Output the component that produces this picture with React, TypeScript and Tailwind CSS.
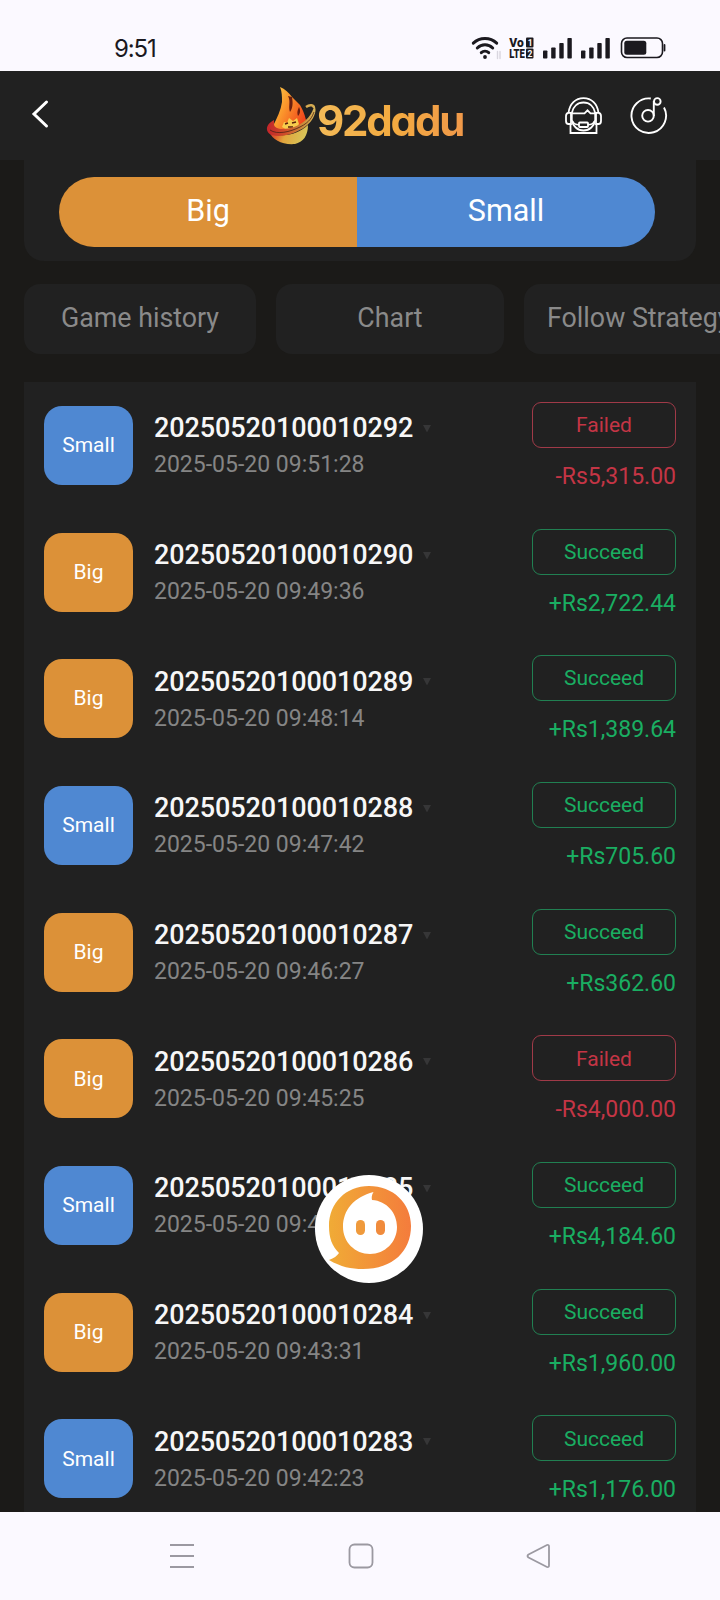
type Pick = 'Big' | 'Small';

interface Bet {
  id: string;
  time: string;
  pick: Pick;
  won: boolean;
  amount: string;
}

const bets: Bet[] = [
  { id: '20250520100010292', time: '2025-05-20 09:51:28', pick: 'Small', won: false, amount: '-Rs5,315.00' },
  { id: '20250520100010290', time: '2025-05-20 09:49:36', pick: 'Big', won: true, amount: '+Rs2,722.44' },
  { id: '20250520100010289', time: '2025-05-20 09:48:14', pick: 'Big', won: true, amount: '+Rs1,389.64' },
  { id: '20250520100010288', time: '2025-05-20 09:47:42', pick: 'Small', won: true, amount: '+Rs705.60' },
  { id: '20250520100010287', time: '2025-05-20 09:46:27', pick: 'Big', won: true, amount: '+Rs362.60' },
  { id: '20250520100010286', time: '2025-05-20 09:45:25', pick: 'Big', won: false, amount: '-Rs4,000.00' },
  { id: '20250520100010285', time: '2025-05-20 09:44:30', pick: 'Small', won: true, amount: '+Rs4,184.60' },
  { id: '20250520100010284', time: '2025-05-20 09:43:31', pick: 'Big', won: true, amount: '+Rs1,960.00' },
  { id: '20250520100010283', time: '2025-05-20 09:42:23', pick: 'Small', won: true, amount: '+Rs1,176.00' },
];

const Signal = () => (
  <svg width="29" height="21" viewBox="0 0 29 21" fill="#1b191f">
    <rect x="0" y="12.5" width="4.4" height="8" rx="0.8" />
    <rect x="8.2" y="9.5" width="4.4" height="11" rx="0.8" />
    <rect x="16.3" y="5" width="4.4" height="15.5" rx="0.8" />
    <rect x="24.4" y="0" width="4.4" height="20.5" rx="0.8" />
  </svg>
);

const StatusBar = () => (
  <div className="flex h-[71px] shrink-0 items-center justify-between bg-[#fbf9ff] pt-[25px] pr-[54px] pl-[114px]">
    <span className="mt-[2px] font-[Inter] text-[24px] leading-none tracking-[-1.1px] text-[#1b191f]">9:51</span>
    <div className="flex items-center">
      <svg width="30" height="24" viewBox="0 0 30 24" fill="none" stroke="#1b191f" strokeWidth="3" strokeLinecap="round">
        <path d="M2.3 7.2a17 17 0 0 1 23.4 0" />
        <path d="M6.3 12a11 11 0 0 1 15.4 0" />
        <path d="M10.3 16.6a5.4 5.4 0 0 1 7.4 0" />
        <circle cx="14" cy="21" r="1" strokeWidth="1.8" />
        <path d="M26.5 15.5v7M29 15.5v7" stroke="#d9d6df" strokeWidth="1.4" />
      </svg>
      <svg width="26" height="22" viewBox="0 0 26 22" className="ml-2 overflow-visible" fill="#1b191f">
        <text x="0.3" y="10" fontFamily="Roboto" fontWeight="900" fontSize="12.5" textLength="14.5" lengthAdjust="spacingAndGlyphs">Vo</text>
        <text x="0.3" y="21" fontFamily="Roboto" fontWeight="900" fontSize="12.5" textLength="15.5" lengthAdjust="spacingAndGlyphs">LTE</text>
        <rect x="17" y="0.6" width="7.5" height="9.8" rx="1" />
        <rect x="17" y="11.6" width="7.5" height="9.8" rx="1" />
        <text x="18.7" y="8.7" fontFamily="Roboto" fontWeight="700" fontSize="8.5" fill="#fbf9ff">1</text>
        <text x="18.4" y="19.6" fontFamily="Roboto" fontWeight="700" fontSize="8.5" fill="#fbf9ff">2</text>
      </svg>
      <span className="ml-2 flex gap-[9px]">
        <Signal />
        <Signal />
      </span>
      <svg width="46" height="22" viewBox="0 0 46 22" className="ml-[10px]">
        <rect x="1.5" y="1" width="41" height="19.5" rx="5.5" fill="none" stroke="#1b191f" strokeWidth="1.6" />
        <rect x="4.3" y="3.8" width="22" height="14" rx="2.5" fill="#1b191f" />
        <path d="M44.5 8v5.5" stroke="#1b191f" strokeWidth="1.8" strokeLinecap="round" />
      </svg>
    </div>
  </div>
);

const Flame = () => (
  <svg width="52" height="60" viewBox="0 0 52 60">
    <defs>
      <linearGradient id="flame" x1="0" y1="0" x2="1" y2="0.6">
        <stop offset="0" stopColor="#fbd04e" />
        <stop offset="0.45" stopColor="#fb982c" />
        <stop offset="1" stopColor="#f0481c" />
      </linearGradient>
      <linearGradient id="ring" x1="0" y1="0" x2="1" y2="0">
        <stop offset="0" stopColor="#c3242a" />
        <stop offset="0.4" stopColor="#d0502a" />
        <stop offset="0.75" stopColor="#c98f3c" />
        <stop offset="1" stopColor="#d9b65a" />
      </linearGradient>
      <linearGradient id="bowl" x1="0" y1="0" x2="1" y2="0.2">
        <stop offset="0" stopColor="#c5202a" />
        <stop offset="0.3" stopColor="#e0672c" />
        <stop offset="0.5" stopColor="#e2a53c" />
        <stop offset="1" stopColor="#d8c458" />
      </linearGradient>
    </defs>
    <path d="M40 21c4-3 8-2 8 1" fill="none" stroke="#d4ab52" strokeWidth="2.4" />
    <path d="M3 46c4 8 13 13 26 12 8-2 13-8 13-19-10 9-26 14-39 7z" fill="url(#bowl)" />
    <path d="M7 40c4-8 8-16 9-24 0-6 0-10-2-15 5 2 9 6 12 10l8 8c4 7 5 11 6 15-2 6-8 9-15 11-8 1-15-1-18-5z" fill="url(#flame)" />
    <path d="M22 10c3 5 0 11 2 16 3-4 3-9 2-15zM33 21c-2 4-2 6-1 9 2-2 3-5 1-9z" fill="#6a1f10" />
    <path d="M16 41l2-5 3 1 2-5 4 3 4-3 2 6-3 4-9 2z" fill="#f7cd4c" />
    <path d="M19 38l3-1M26 37l4-1M22 41h5" stroke="#5a220c" strokeWidth="1.4" />
    <path d="M8 34c-8 4-10 12-2 15 14 4 37-6 42-19 2-5 2-8 0-10-1 7-8 17-20 21-9 3-20 3-20-3 0-1 0-3 0-4z" fill="url(#ring)" />
    <path d="M4 44c7 5 20 2 30-3s12-10 14-15" fill="none" stroke="#4a2114" strokeWidth="0.8" />
  </svg>
);

const Header = () => (
  <header className="flex h-[89px] shrink-0 items-center bg-[#212121] pl-[30px]">
    <svg width="20" height="30" viewBox="0 0 20 30" fill="none" stroke="#fff" strokeWidth="3" className="mb-[3px]">
      <path d="M16.5 3 4 15l12.5 12" strokeLinecap="round" />
    </svg>
    <div className="ml-[216px] flex items-center">
      <Flame />
      <span className="mt-[11px] -ml-px bg-linear-to-r from-[#f3ba58] via-[#f3ab40] to-[#f0984a] bg-clip-text pr-1 font-[Inter] text-[42px] leading-[50px] font-bold tracking-[-2.2px] text-transparent [font-feature-settings:'cv11','ss03']">
        92dadu
      </span>
    </div>
    <div className="ml-auto flex gap-[28px] pr-[52px]">
      <svg width="38" height="38" viewBox="0 0 38 38" fill="none" stroke="#fff" strokeWidth="1.8">
        <path d="M3.5 16C4.500 7 10.500 1.200 18.500 1.200S32.500 7 33.500 16" />
        <path d="M6.800 16C8 9.500 12.500 5.500 18.500 5.500S29 9.500 30.200 16v7c-1 6-5.500 10.500-11.700 10.500S7.800 29 6.800 23z" />
        <path d="M6 15.800H3.500Q1 16 1 19v5q0 3 2.500 3H6zM31 15.800h2.500Q36 16 36 19v5q0 3-2.500 3H31z" />
        <path d="M7 16.300h12.500l3-3 3 3H30" />
        <path d="M5.500 27v9h26v-9" />
        <path d="M7.500 24c1 2.500 3 3.800 6.500 3.800M23 27.800c3.500 0 5.500-1.300 6.500-3.800" strokeWidth="1.500" />
        <rect x="14" y="25.500" width="9" height="4.500" rx="0.800" />
      </svg>
      <svg width="38" height="38" viewBox="0 0 38 38" fill="none" stroke="#fff" strokeWidth="1.9" className="-ml-px">
        <path d="M20.800 1.500A17.300 17.300 0 1 0 34 10.500" />
        <circle cx="18" cy="18.800" r="5.800" />
        <path d="M23.800 19V4" />
        <circle cx="27.300" cy="4.400" r="3.300" />
      </svg>
    </div>
  </header>
);

const BetRow = ({ bet }: { bet: Bet }) => (
  <div className="flex h-[126.7px] items-center px-5">
    <div
      className={`flex h-[79px] w-[89px] items-center justify-center rounded-[18px] pt-px text-[21px] text-white ${
        bet.pick === 'Big' ? 'bg-[#dc9138]' : 'bg-[#4f88d2]'
      }`}
    >
      {bet.pick}
    </div>
    <div className="ml-[21px] pt-[3px]">
      <div className="flex items-center text-[27px] leading-[36px] font-medium tracking-[-0.1px] text-[#f7f7f7]">
        {bet.id}
        <svg width="8" height="9" viewBox="0 0 8 9" className="ml-[10px]" fill="#363637">
          <path d="M0 1h8L4 8.500z" />
        </svg>
      </div>
      <div className="text-[23px] leading-[37px] text-[#858585]">{bet.time}</div>
    </div>
    <div className={`ml-auto flex flex-col items-end pt-[2px] ${bet.won ? 'text-[#1aae62]' : 'text-[#c43545]'}`}>
      <div
        className={`flex h-[46px] w-[144px] items-center justify-center rounded-[9px] border pt-[2px] text-[21px] ${
          bet.won ? 'border-[#218052]' : 'border-[#a03a48]'
        }`}
      >
        {bet.won ? 'Succeed' : 'Failed'}
      </div>
      <div className="mt-[15px] text-[23px] leading-[28px]">{bet.amount}</div>
    </div>
  </div>
);

const ChatBubble = () => (
  <div className="absolute top-[1175px] left-[315px] h-[108px] w-[108px] rounded-full bg-white">
    <svg width="108" height="108" viewBox="0 0 108 108">
      <defs>
        <linearGradient id="chat" x1="0" y1="0" x2="1" y2="0">
          <stop offset="0" stopColor="#f0ab36" />
          <stop offset="1" stopColor="#f47c3c" />
        </linearGradient>
      </defs>
      <path d="M54 11C31 11 14 28 14 51c0 12 3 20 10 27-2 3-5 5-10 7 12 7 22 9 34 9 30 0 48-18 48-43 0-23-18-40-42-40z" fill="url(#chat)" />
      <path d="M58.500 17c-2 3-2 6-1.500 8 15 1 25 13 25 27 0 15-12 27-27 27S28 67 28 52c0-17 11-30 30.500-35z" fill="#fff" />
      <rect x="41" y="45" width="9" height="15" rx="4.500" fill="#ef9a3c" />
      <rect x="61" y="45" width="9" height="15" rx="4.500" fill="#f08b3c" />
    </svg>
  </div>
);

const NavBar = () => (
  <nav className="flex h-[88px] shrink-0 items-center justify-between bg-[#fbf9ff] pr-[170px] pl-[169px]">
    <svg width="26" height="26" viewBox="0 0 26 26" stroke="#9b99a1" strokeWidth="1.8">
      <path d="M1 2h24M1 13h24M1 24h24" />
    </svg>
    <svg width="26" height="26" viewBox="0 0 26 26" fill="none" stroke="#9b99a1" strokeWidth="1.8">
      <rect x="1.5" y="1.5" width="23" height="23" rx="5" />
    </svg>
    <svg width="24" height="26" viewBox="0 0 24 26" fill="none" stroke="#9b99a1" strokeWidth="1.8" strokeLinejoin="round">
      <path d="M21 2 2.500 11.500q-2 1.500 0 3L21 24q2 .5 2-1.500V3.500Q23 1.500 21 2z" />
    </svg>
  </nav>
);

export default function App() {
  return (
    <div className="relative flex h-[1600px] w-[720px] flex-col overflow-hidden bg-[#1b1a18] font-[Roboto,sans-serif]">
      <StatusBar />
      <Header />
      <main className="min-h-0 flex-1 overflow-hidden pl-6">
        <section className="mr-6 h-[101px] rounded-b-[20px] bg-[#212121] pt-[17px] pr-[41px] pl-[35px]">
          <div className="flex h-[70px] overflow-hidden rounded-full text-[30.5px] text-white">
            <div className="flex flex-1 items-center justify-center bg-[#dc9138] pb-[2px]">Big</div>
            <div className="flex flex-1 items-center justify-center bg-[#4f88d2] pb-[2px]">Small</div>
          </div>
        </section>
        <div className="mt-[23px] flex gap-5 text-[26.8px] whitespace-nowrap text-[#8a8a8a]">
          <div className="flex h-[70px] w-[232px] shrink-0 items-center justify-center rounded-[16px] bg-[#212121] pb-[2px]">Game history</div>
          <div className="flex h-[70px] w-[228px] shrink-0 items-center justify-center rounded-[16px] bg-[#212121] pb-[2px]">Chart</div>
          <div className="flex h-[70px] w-[240px] shrink-0 items-center rounded-[16px] bg-[#212121] pb-[2px] pl-[23px]">Follow Strategy</div>
        </div>
        <section className="mt-7 mr-6 bg-[#212121]">
          {bets.map((bet) => (
            <BetRow key={bet.id} bet={bet} />
          ))}
        </section>
      </main>
      <NavBar />
      <ChatBubble />
    </div>
  );
}
